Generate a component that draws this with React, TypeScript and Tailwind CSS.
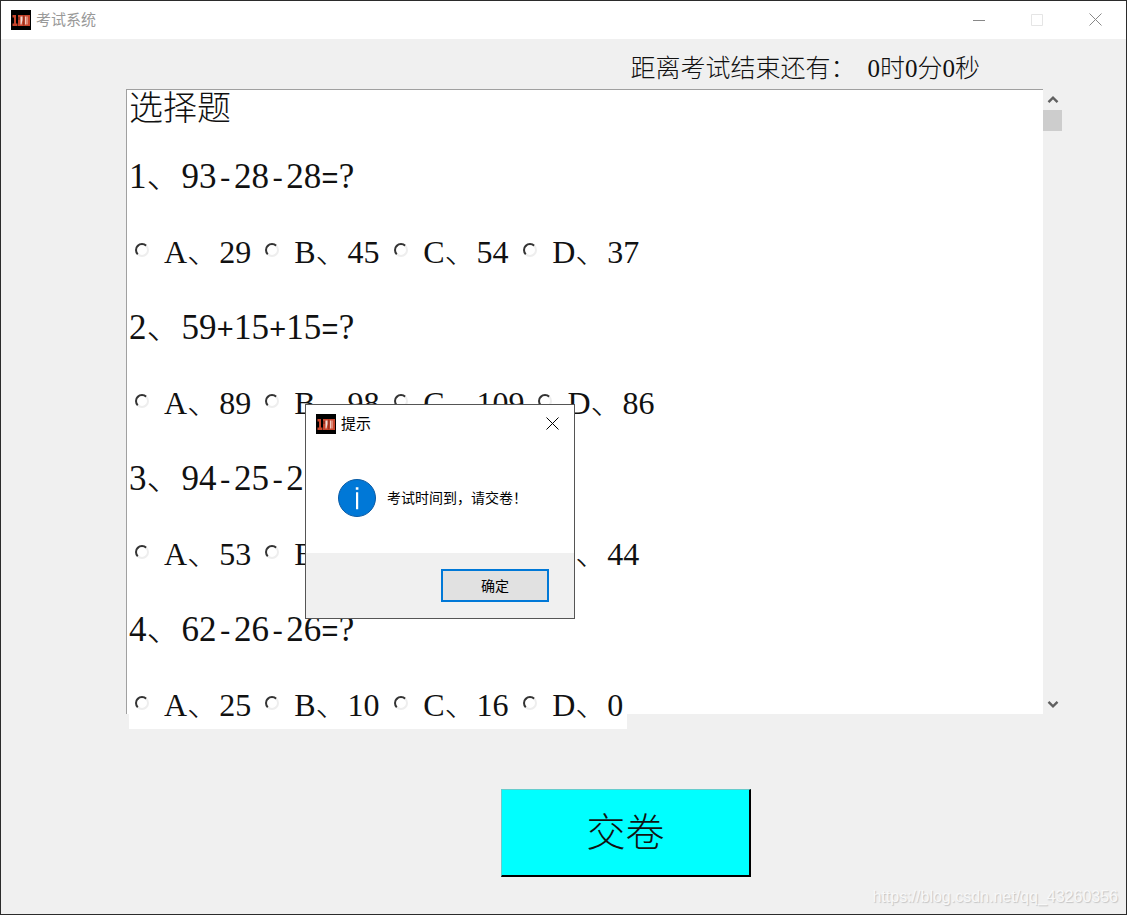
import { useState } from 'react';

interface Option {
  key: string;
  value: number;
}

interface Question {
  id: number;
  expression: string;
  options: Option[];
}

const questions: Question[] = [
  {
    id: 1,
    expression: '93-28-28=?',
    options: [
      { key: 'A', value: 29 },
      { key: 'B', value: 45 },
      { key: 'C', value: 54 },
      { key: 'D', value: 37 },
    ],
  },
  {
    id: 2,
    expression: '59+15+15=?',
    options: [
      { key: 'A', value: 89 },
      { key: 'B', value: 98 },
      { key: 'C', value: 109 },
      { key: 'D', value: 86 },
    ],
  },
  {
    id: 3,
    expression: '94-25-25=?',
    options: [
      { key: 'A', value: 53 },
      { key: 'B', value: 35 },
      { key: 'C', value: 54 },
      { key: 'D', value: 44 },
    ],
  },
  {
    id: 4,
    expression: '62-26-26=?',
    options: [
      { key: 'A', value: 25 },
      { key: 'B', value: 10 },
      { key: 'C', value: 16 },
      { key: 'D', value: 0 },
    ],
  },
];

function AppIcon() {
  return (
    <svg width="20" height="20" viewBox="0 0 20 20" aria-hidden="true">
      <rect width="20" height="20" fill="#000" />
      <path d="M1.500 5H5v8.500h1.500V16h-5v-2.500H3V7.500H1.500z" fill="#c8452c" />
      <path d="M7 5h12v11H7z" fill="#c8452c" />
      <path d="M9.500 6.500h2V10l-1 4.500h-1z" fill="#f0dcd6" />
      <path d="M14 6.500h1v8h-1zM15.500 6.500h1v8h-1z" fill="#f0c8bc" />
      <path d="M12.500 5.500h.7v10h-.7z" fill="#6a2014" />
      <path d="M7.500 7h1v3h-1z" fill="#6a2014" />
    </svg>
  );
}

function CloseIcon() {
  return (
    <svg width="13" height="13" viewBox="0 0 13 13" fill="none" stroke="currentColor" aria-hidden="true">
      <path d="M.5 .5l12 12M12.5 .5l-12 12" />
    </svg>
  );
}

function TitleBar() {
  return (
    <header className="flex h-[38px] shrink-0 items-center bg-white pr-6 pb-px pl-[10px]">
      <AppIcon />
      <h1 className="ml-[5px] flex-1 text-[15px] leading-5 text-[#999999]">考试系统</h1>
      <div className="flex items-center gap-[46px] text-[#888888]">
        <button type="button" aria-label="最小化">
          <svg width="12" height="12" viewBox="0 0 12 12" className="block">
            <path d="M0 6.5h12" stroke="currentColor" />
          </svg>
        </button>
        <button type="button" aria-label="最大化" disabled>
          <svg width="12" height="12" viewBox="0 0 12 12" className="block">
            <path d="M.5 .5h11v11H.5z" fill="none" stroke="#e5e5e5" />
          </svg>
        </button>
        <button type="button" aria-label="关闭">
          <CloseIcon />
        </button>
      </div>
    </header>
  );
}

// digits are set in the serif face, operators in the fixed-width one
function Expression({ text }: { text: string }) {
  return (
    <>
      {text.split(/([-+=])/).map((part, i) =>
        /^[-+=]$/.test(part) ? (
          <span key={i} className="font-['Liberation_Mono',monospace] text-[29px]">
            {part}
          </span>
        ) : (
          part
        )
      )}
    </>
  );
}

function QuestionBlock({ question }: { question: Question }) {
  const [picked, setPicked] = useState<string | null>(null);

  return (
    <fieldset className="w-max">
      <legend className="mb-[27px] h-12 text-[35px] leading-[48px]">
        {question.id}、<Expression text={question.expression} />
      </legend>
      <div className="flex h-12 items-center bg-white pr-1 pl-[6px] text-[32px] leading-[48px]">
        {question.options.map((option) => (
          <label key={option.key} className="group flex items-center">
            <input
              type="radio"
              name={`question-${question.id}`}
              checked={picked === option.key}
              onChange={() => setPicked(option.key)}
              className="mr-[15px] mb-1 size-[14px] appearance-none rounded-full border-2 border-t-[#333333] border-r-[#eeeeee] border-b-[#eeeeee] border-l-[#333333] checked:bg-black"
            />
            <span className="min-w-[100px] pr-[14px] group-last:min-w-0 group-last:pr-0">
              {option.key}、{option.value}
            </span>
          </label>
        ))}
      </div>
    </fieldset>
  );
}

function ScrollBar() {
  return (
    <div className="flex w-[19px] flex-col text-[#606060]">
      <button type="button" aria-label="向上滚动" className="flex h-[21px] items-center justify-center">
        <svg width="12" height="9" viewBox="0 0 12 9">
          <path d="M1.500 7.200L6 2.700l4.500 4.500" fill="none" stroke="currentColor" strokeWidth="2.4" />
        </svg>
      </button>
      <div className="h-[21px] bg-[#cdcdcd]" />
      <button type="button" aria-label="向下滚动" className="mt-auto flex h-5 items-center justify-center">
        <svg width="12" height="9" viewBox="0 0 12 9">
          <path d="M1.500 1.800L6 6.300l4.500-4.500" fill="none" stroke="currentColor" strokeWidth="2.4" />
        </svg>
      </button>
    </div>
  );
}

function MessageDialog({ onClose }: { onClose: () => void }) {
  return (
    <div
      role="dialog"
      aria-label="提示"
      className="absolute top-[403px] left-[304px] w-[270px] border border-[#555555] bg-white text-black"
    >
      <div className="flex h-[38px] items-center pr-[15px] pb-px pl-[10px]">
        <AppIcon />
        <h2 className="ml-[5px] flex-1 text-[15px] leading-5">提示</h2>
        <button type="button" aria-label="关闭" onClick={onClose}>
          <CloseIcon />
        </button>
      </div>
      <div className="flex h-[110px] items-center gap-[11px] pl-8">
        <svg width="38" height="38" viewBox="0 0 38 38" aria-hidden="true">
          <circle cx="19" cy="19" r="18.500" fill="#0078d7" stroke="#0a5ba5" />
          <path d="M17.800 8.200h2.600v2.600h-2.600zM18 13.200h2.200v17H18z" fill="#fff" />
        </svg>
        <p className="text-[14px] leading-5">考试时间到，请交卷！</p>
      </div>
      <div className="flex justify-end bg-[#f0f0f0] px-[25px] py-4">
        <button
          type="button"
          onClick={onClose}
          className="h-[33px] w-[108px] border-2 border-[#0078d7] bg-[#e1e1e1] text-[14px] leading-5"
        >
          确定
        </button>
      </div>
    </div>
  );
}

export default function App() {
  const [open, setOpen] = useState(true);

  return (
    <div className="relative flex min-h-screen flex-col border border-[#2b2b2b] bg-[#f0f0f0] font-['Liberation_Sans','Noto_Sans_CJK_SC',sans-serif]">
      <TitleBar />

      <main className="flex flex-1 flex-col font-['Liberation_Serif','Noto_Sans_CJK_SC',serif] font-light text-[#111111]">
        <p className="mr-[146px] flex h-[50px] items-center justify-end gap-3 pt-[10px] text-[25px] leading-8">
          <span>距离考试结束还有：</span>
          <span>0时0分0秒</span>
        </p>

        <div className="mr-16 ml-[125px] flex h-[625px]">
          <section className="flex-1 border-t border-l border-[#a0a0a0] bg-white pl-[2px]">
            <h2 className="mb-[25px] h-[38px] text-[34px] leading-[38px]">选择题</h2>
            <div className="flex flex-col gap-7">
              {questions.map((question) => (
                <QuestionBlock key={question.id} question={question} />
              ))}
            </div>
          </section>
          <ScrollBar />
        </div>

        <button
          type="button"
          className="mt-[75px] ml-[125px] h-[88px] w-[250px] self-center border border-t-[#66cccc] border-r-2 border-r-black border-b-2 border-b-black border-l-[#66cccc] bg-[#00ffff] text-[39px] leading-10"
        >
          交卷
        </button>
      </main>

      <footer className="absolute right-2 bottom-[7px] text-base leading-5 text-[#f8f8f8] [text-shadow:1px_1px_1px_#c4c4c4]">
        https://blog.csdn.net/qq_43260356
      </footer>

      {open && <MessageDialog onClose={() => setOpen(false)} />}
    </div>
  );
}
